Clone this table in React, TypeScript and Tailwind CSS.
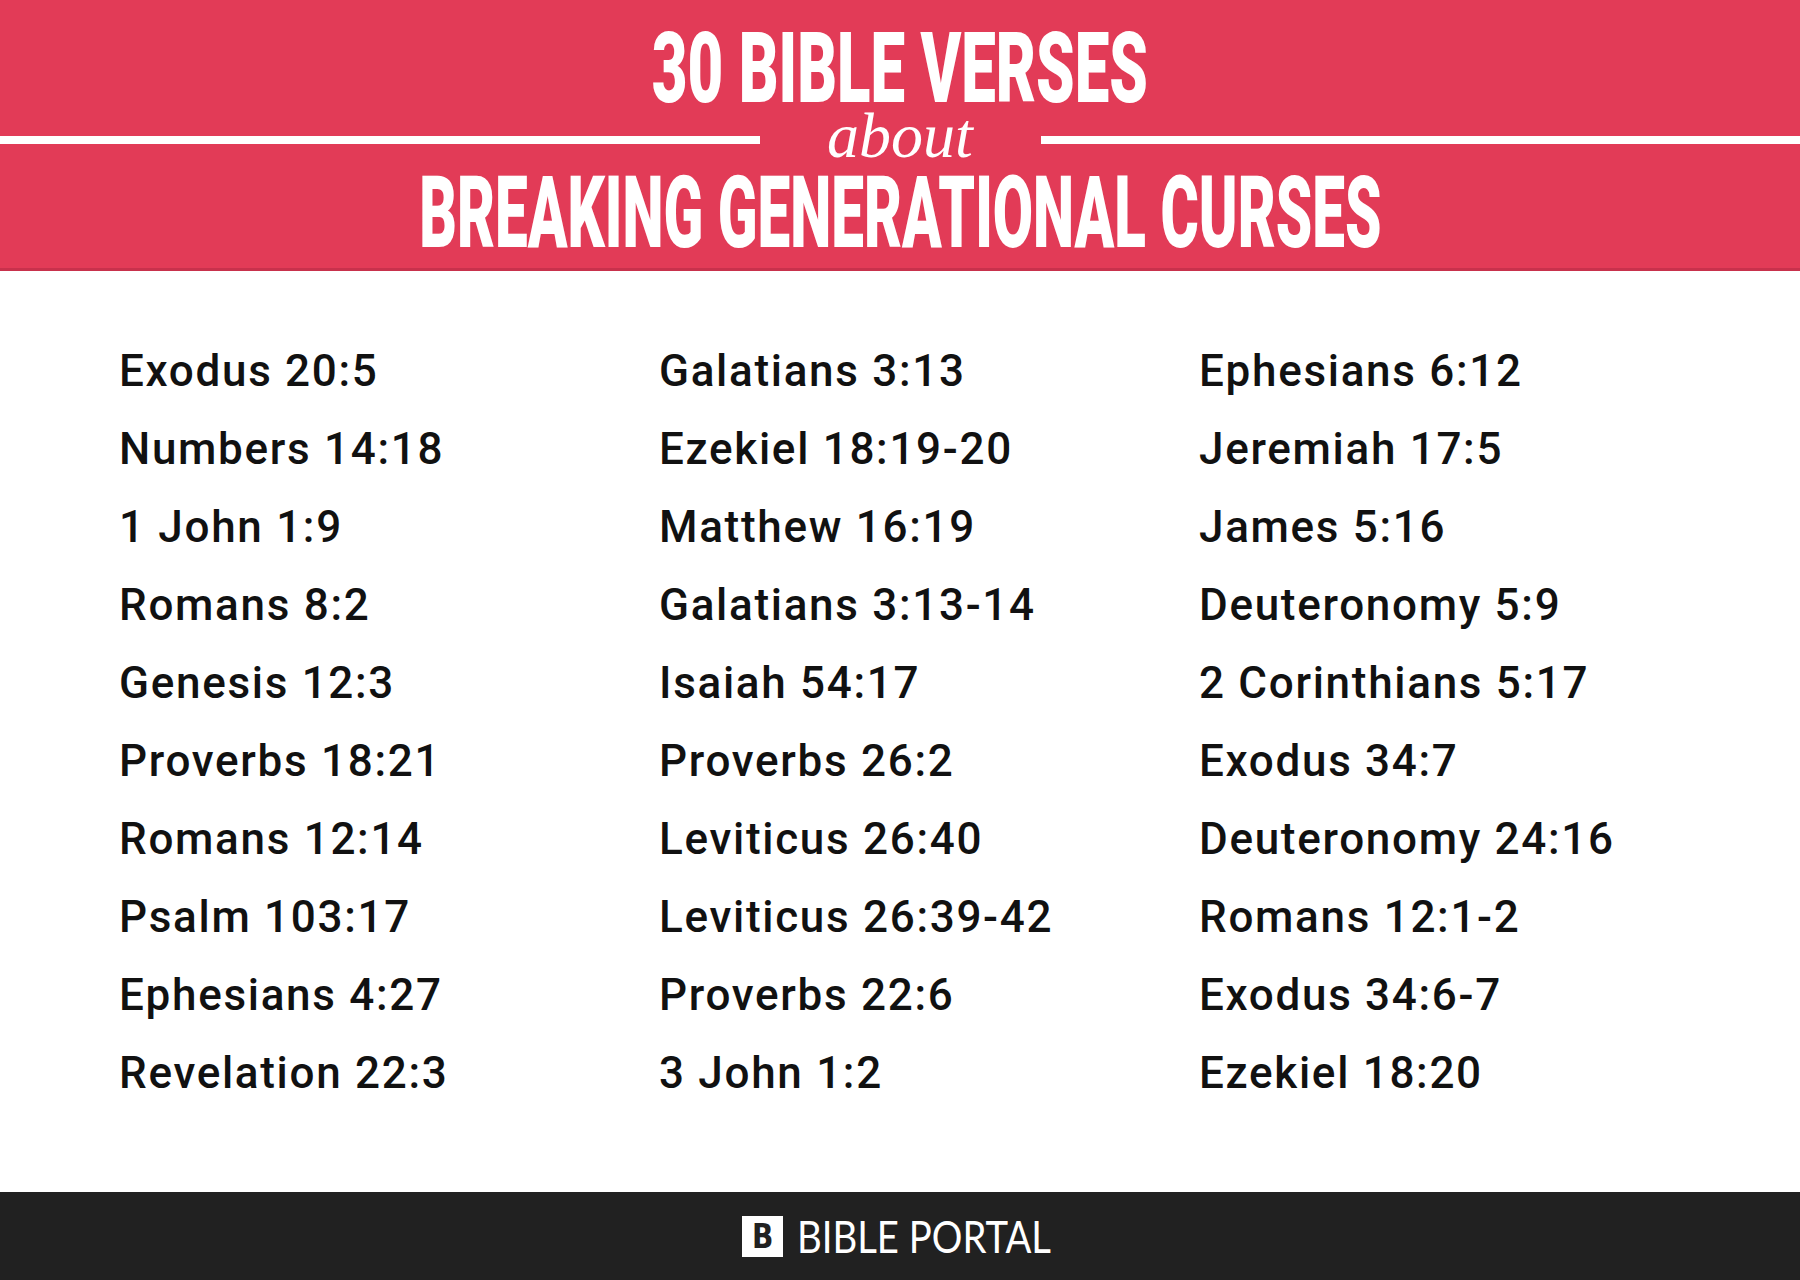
const rows: [string, string, string][] = [
  ['Exodus 20:5', 'Galatians 3:13', 'Ephesians 6:12'],
  ['Numbers 14:18', 'Ezekiel 18:19-20', 'Jeremiah 17:5'],
  ['1 John 1:9', 'Matthew 16:19', 'James 5:16'],
  ['Romans 8:2', 'Galatians 3:13-14', 'Deuteronomy 5:9'],
  ['Genesis 12:3', 'Isaiah 54:17', '2 Corinthians 5:17'],
  ['Proverbs 18:21', 'Proverbs 26:2', 'Exodus 34:7'],
  ['Romans 12:14', 'Leviticus 26:40', 'Deuteronomy 24:16'],
  ['Psalm 103:17', 'Leviticus 26:39-42', 'Romans 12:1-2'],
  ['Ephesians 4:27', 'Proverbs 22:6', 'Exodus 34:6-7'],
  ['Revelation 22:3', '3 John 1:2', 'Ezekiel 18:20'],
];

function Title() {
  return (
    <header className="flex h-[271px] flex-col border-b-[3px] border-[#c8314c] bg-[#e23b57] text-white">
      <div className="mt-[20px] flex h-[98px] justify-center">
        <span className="inline-block origin-center scale-x-[0.63] whitespace-nowrap font-['Roboto',sans-serif] text-[98px] font-black leading-[98px]">
          30 BIBLE VERSES
        </span>
      </div>
      <div className="flex h-[44px] items-center">
        <div className="h-[8px] flex-1 bg-white" />
        <div className="flex h-[44px] w-[281px] items-start justify-center">
          <span className="inline-block font-['Liberation_Serif',serif] text-[64px] italic leading-[35px]">
            about
          </span>
        </div>
        <div className="h-[8px] flex-1 bg-white" />
      </div>
      <div className="flex h-[101px] justify-center">
        <span className="inline-block origin-center scale-x-[0.578] whitespace-nowrap font-['Roboto',sans-serif] text-[101px] font-black leading-[101px]">
          BREAKING GENERATIONAL CURSES
        </span>
      </div>
    </header>
  );
}

function VerseList() {
  return (
    <main className="bg-white pb-[80px] pl-[119px] pt-[61px]">
      <div className="grid grid-cols-[540px_540px_540px]">
        {rows.flat().map((ref) => (
          <div
            key={ref}
            className="h-[78px] whitespace-nowrap font-['Roboto',sans-serif] text-[44px] font-medium leading-[78px] tracking-[1.7px] text-[#111111]"
          >
            {ref}
          </div>
        ))}
      </div>
    </main>
  );
}

function Footer() {
  return (
    <footer className="flex h-[88px] items-center justify-center gap-[14px] bg-[#212121] pr-[11px]">
      <div className="flex h-[41px] w-[41px] items-center justify-center bg-white">
        <span className="inline-block scale-x-[0.85] font-['DejaVu_Sans',sans-serif] text-[33px] font-bold leading-none text-[#212121]">
          B
        </span>
      </div>
      <div className="w-[250px]">
        <span className="inline-block origin-left scale-x-[0.87] whitespace-nowrap font-['Lato',sans-serif] text-[44px] leading-none text-white">
          BIBLE PORTAL
        </span>
      </div>
    </footer>
  );
}

export default function App() {
  return (
    <div className="w-[1800px] bg-white">
      <Title />
      <VerseList />
      <Footer />
    </div>
  );
}
